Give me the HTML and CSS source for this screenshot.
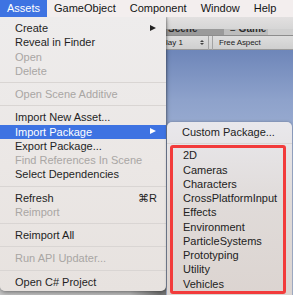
FILE: index.html
```html
<!DOCTYPE html>
<html>
<head>
<meta charset="utf-8">
<link rel="stylesheet" href="styles.css">
</head>
<body>
<div class="screen">
  <div class="menubar">
    <span class="mb-item active">Assets</span>
    <span class="mb-item">GameObject</span>
    <span class="mb-item">Component</span>
    <span class="mb-item">Window</span>
    <span class="mb-item">Help</span>
  </div>
  <div class="stage">
    <div class="left-panel"></div>
    <div class="game">
      <div class="g-top"></div>
      <div class="g-tabs">
        <span class="tab tab-scene"><span class="tab-text">Scene</span></span>
        <span class="tab tab-game"><span class="tab-text">≡ Game</span></span>
      </div>
      <div class="g-toolbar">
        <span class="tb-display">Display 1<span class="updown"><i class="up"></i><i class="down"></i></span></span>
        <span class="tb-aspect">Free Aspect</span>
      </div>
      <div class="g-view"></div>
    </div>

    <div class="menu main-menu">
      <div class="item">Create<i class="arrow"></i></div>
      <div class="item">Reveal in Finder</div>
      <div class="item disabled">Open</div>
      <div class="item disabled">Delete</div>
      <div class="sep"></div>
      <div class="item disabled">Open Scene Additive</div>
      <div class="sep"></div>
      <div class="item">Import New Asset...</div>
      <div class="item selected">Import Package<i class="arrow"></i></div>
      <div class="item">Export Package...</div>
      <div class="item disabled">Find References In Scene</div>
      <div class="item">Select Dependencies</div>
      <div class="sep"></div>
      <div class="item">Refresh<span class="shortcut">⌘R</span></div>
      <div class="item disabled">Reimport</div>
      <div class="sep"></div>
      <div class="item">Reimport All</div>
      <div class="sep"></div>
      <div class="item disabled">Run API Updater...</div>
      <div class="sep"></div>
      <div class="item">Open C# Project</div>
    </div>

    <div class="menu sub-menu">
      <div class="item">Custom Package...</div>
      <div class="sep"></div>
      <div class="item">2D</div>
      <div class="item">Cameras</div>
      <div class="item">Characters</div>
      <div class="item">CrossPlatformInput</div>
      <div class="item">Effects</div>
      <div class="item">Environment</div>
      <div class="item">ParticleSystems</div>
      <div class="item">Prototyping</div>
      <div class="item">Utility</div>
      <div class="item">Vehicles</div>
      <div class="annot"></div>
    </div>
  </div>
</div>
</body>
</html>
```
FILE: styles.css
```css
* { box-sizing: border-box; }
html, body { margin: 0; padding: 0; }
body {
  width: 293px;
  height: 295px;
  overflow: hidden;
  font-family: "Liberation Sans", Arial, "DejaVu Sans", sans-serif;
  font-size: 11px;
  color: #1c1c1c;
}
.screen { width: 293px; height: 295px; overflow: hidden; }

.menubar {
  display: flex;
  height: 17px;
  background: #f3eeee;
}
.mb-item {
  padding: 0 7px;
  line-height: 17px;
  color: #141414;
}
.mb-item.active { background: #3e73e2; color: #fff; }

.stage {
  position: relative;
  display: flex;
  height: 278px;
  overflow: hidden;
}
.left-panel {
  width: 166px;
  background: linear-gradient(90deg, #c9c9c9 0, #c2c2c2 130px, #7a7a7a 160px);
}
.game {
  flex: 1;
  display: flex;
  flex-direction: column;
  background: #d6d6d6;
}
.g-top {
  height: 12px;
  background: linear-gradient(#e2e0e0, #d6d6d6);
}
.g-tabs {
  display: flex;
  height: 7px;
  background: #cfcfcf;
  overflow: hidden;
  border-bottom: 1px solid #8d8d8d;
}
.tab { overflow: hidden; }
.tab-scene {
  width: 58px;
  background: #9a9a9a;
  padding-left: 2px;
}
.tab-game {
  width: 44px;
  background: #bdbdbd;
  padding-left: 6px;
}
.tab-text {
  display: block;
  font-size: 10px;
  font-weight: bold;
  line-height: 10px;
  margin-top: -5px;
  color: #2a2a2a;
  white-space: nowrap;
}
.g-toolbar {
  display: flex;
  height: 14px;
  align-items: center;
  background: linear-gradient(#dedede, #cfcfcf);
  border-bottom: 1px solid #9a9a9a;
  font-size: 8px;
  color: #222;
}
.tb-display {
  display: flex;
  align-items: center;
  height: 14px;
  margin-left: -16px;
  width: 59px;
  white-space: nowrap;
  border-right: 1px solid #a3a3a3;
}
.updown {
  display: flex;
  flex-direction: column;
  gap: 1px;
  margin-left: 17px;
}
.updown i {
  display: block;
  width: 0; height: 0;
  border-left: 2px solid transparent;
  border-right: 2px solid transparent;
}
.updown .up { border-bottom: 2px solid #444; }
.updown .down { border-top: 2px solid #444; }
.tb-aspect {
  height: 14px;
  line-height: 14px;
  padding-left: 6px;
  border-left: 1px solid #a3a3a3;
  margin-left: 3px;
  flex: 1;
  letter-spacing: -0.1px;
}
.g-view {
  flex: 1;
  background: linear-gradient(#6e86b9 0, #8ea2cb 50px, #a3b4d5 110px, #b0bdd8 240px);
}

.menu {
  position: absolute;
  font-size: 11px;
}
.item {
  position: relative;
  height: 14.25px;
  line-height: 14.25px;
  padding-left: 15px;
  white-space: nowrap;
  color: #1f1f1f;
}
.item.disabled { color: #a9a6a4; }
.item.selected { background: #3e73e2; color: #fff; }
.sep {
  height: 9px;
  display: flex;
  align-items: center;
}
.sep::before {
  content: "";
  display: block;
  width: 100%;
  height: 1px;
  background: #d9d5d3;
}
.arrow {
  position: absolute;
  left: 150px;
  top: 3.5px;
  width: 0; height: 0;
  border-top: 3.5px solid transparent;
  border-bottom: 3.5px solid transparent;
  border-left: 6px solid #222;
}
.item.selected .arrow { border-left-color: #fff; }
.shortcut {
  position: absolute;
  right: 9px;
  top: 0;
}

.main-menu {
  left: 0;
  top: 0;
  width: 166px;
  padding: 4px 0 2px;
  background: linear-gradient(#eeecec, #ebe7e5 150px, #e7e2df);
  border-radius: 0 0 5px 5px;
  box-shadow: 0 2px 5px rgba(0,0,0,0.35), 1px 0 2px rgba(0,0,0,0.25);
}
.sub-menu {
  left: 167px;
  top: 105px;
  width: 125px;
  height: 190px;
  padding-top: 3px;
  background: linear-gradient(#e9e8ec, #e0dbd9 80px, #dbd3cf);
  border-radius: 5px 5px 0 0;
  box-shadow: 0 0 3px rgba(0,0,0,0.3);
}
.sub-menu .item { padding-left: 16px; color: #222; }
.sub-menu .item:first-child { padding-left: 15px; }
.annot {
  position: absolute;
  left: 3px;
  top: 23px;
  width: 116px;
  height: 149px;
  border: 3px solid #f23b3b;
  border-radius: 3px;
}
```
